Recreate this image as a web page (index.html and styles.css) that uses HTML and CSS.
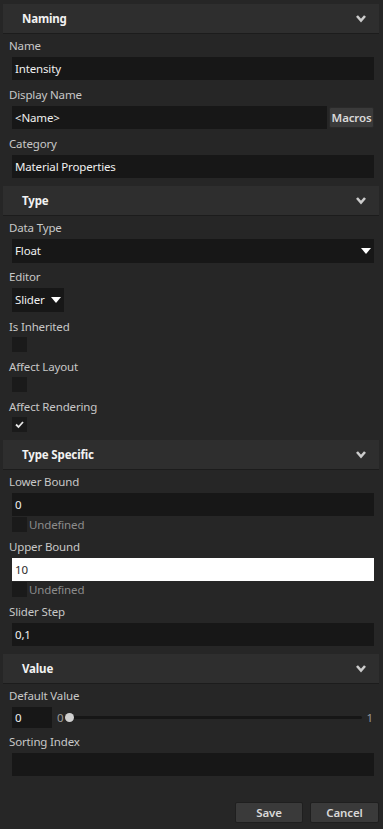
FILE: index.html
```html
<!DOCTYPE html>
<html lang="en">
  <head>
    <title>Property Editor</title>
    <link rel="stylesheet" href="styles.css">
  </head>

  <body>
    <main class="panel">
      <section class="group">
        <header class="group-head">
          <h2>Naming</h2>
          <svg class="chevron" viewBox="0 0 12 9"><path d="M2,2 6,6.5 10,2" /></svg>
        </header>
        <div class="field">
          <label>Name</label>
          <div class="input">Intensity</div>
        </div>
        <div class="field">
          <label>Display Name</label>
          <div class="input-row">
            <div class="input">&lt;Name&gt;</div>
            <button class="btn btn-macros">Macros</button>
          </div>
        </div>
        <div class="field">
          <label>Category</label>
          <div class="input">Material Properties</div>
        </div>
      </section>

      <section class="group">
        <header class="group-head">
          <h2>Type</h2>
          <svg class="chevron" viewBox="0 0 12 9"><path d="M2,2 6,6.5 10,2" /></svg>
        </header>
        <div class="field">
          <label>Data Type</label>
          <div class="input select">
            Float
            <svg class="caret" viewBox="0 0 10 6"><path d="M0,0 10,0 5,6Z" /></svg>
          </div>
        </div>
        <div class="field field-tight">
          <label>Editor</label>
          <div class="input select select-small">
            Slider
            <svg class="caret" viewBox="0 0 10 6"><path d="M0,0 10,0 5,6Z" /></svg>
          </div>
        </div>
        <div class="field">
          <label>Is Inherited</label>
          <span class="checkbox"></span>
        </div>
        <div class="field">
          <label>Affect Layout</label>
          <span class="checkbox"></span>
        </div>
        <div class="field">
          <label>Affect Rendering</label>
          <span class="checkbox checked">
            <svg viewBox="0 0 15 15"><path d="M4,7.5 6.5,10 11,5" /></svg>
          </span>
        </div>
      </section>

      <section class="group">
        <header class="group-head">
          <h2>Type Specific</h2>
          <svg class="chevron" viewBox="0 0 12 9"><path d="M2,2 6,6.5 10,2" /></svg>
        </header>
        <div class="field">
          <label>Lower Bound</label>
          <div class="input">0</div>
          <div class="option"><span class="checkbox"></span>Undefined</div>
        </div>
        <div class="field">
          <label>Upper Bound</label>
          <div class="input focused">10</div>
          <div class="option"><span class="checkbox"></span>Undefined</div>
        </div>
        <div class="field">
          <label>Slider Step</label>
          <div class="input">0,1</div>
        </div>
      </section>

      <section class="group">
        <header class="group-head">
          <h2>Value</h2>
          <svg class="chevron" viewBox="0 0 12 9"><path d="M2,2 6,6.5 10,2" /></svg>
        </header>
        <div class="field">
          <label>Default Value</label>
          <div class="slider-row">
            <div class="input number">0</div>
            <span class="range-label">0</span>
            <div class="track"><span class="thumb"></span></div>
            <span class="range-label">1</span>
          </div>
        </div>
        <div class="field field-tight">
          <label>Sorting Index</label>
          <div class="input"></div>
        </div>
      </section>

      <footer class="actions">
        <button class="btn btn-action">Save</button>
        <button class="btn btn-action btn-cancel">Cancel</button>
      </footer>
    </main>
  </body>
</html>
```

FILE: styles.css
```css
html,
body {
  margin: 0;
  background: #262626;
  font-size: 11.5px;
  letter-spacing: -0.15px;
  font-family: 'Noto Sans', 'Open Sans', arial, sans-serif;
  color: #c8c8c8;
}

.panel {
  padding: 4px 4px 0 3px;
}

.group + .group {
  margin-top: 8px;
}

.group-head {
  display: flex;
  align-items: center;
  justify-content: space-between;
  height: 29px;
  background: #2e2e2e;
  border-bottom: 1px solid #1c1c1c;
  padding: 0 12px 0 19px;
}

.group-head h2 {
  margin: 0;
  font-size: 11.5px;
  line-height: 16px;
  font-weight: bold;
  color: #f2f2f2;
}

.chevron {
  width: 12px;
  height: 9px;
  fill: none;
  stroke: #cccccc;
  stroke-width: 2.6;
}

.field {
  padding: 0 5px 0 6px;
  margin-top: 6px;
}

.field.field-tight {
  margin-top: 5px;
}

.group-head + .field {
  margin-top: 3px;
}

.field label {
  display: block;
  line-height: 17px;
  height: 17px;
}

.input {
  box-sizing: border-box;
  height: 23px;
  margin: 3px 0 0 3px;
  padding: 0 3px;
  background: #171717;
  color: #f0f0f0;
  line-height: 23px;
  white-space: nowrap;
}

.input.focused {
  background: #ffffff;
  color: #2a2a2a;
}

.input-row {
  display: flex;
  align-items: flex-start;
  gap: 2px;
}

.input-row .input {
  flex: 1;
}

.btn {
  font-family: inherit;
  font-size: 11.5px;
  letter-spacing: -0.15px;
  color: #d8d8d8;
  background: #3a3a3a;
  border: 1px solid #2a2a2a;
  border-radius: 2px;
  padding: 0;
  cursor: pointer;
}

.btn-macros {
  margin: 4px 0 0;
  width: 45px;
  height: 21px;
  font-weight: 600;
}

.select {
  height: 24px;
  line-height: 24px;
  display: flex;
  justify-content: space-between;
  align-items: center;
}

.select-small {
  width: 52px;
}

.caret {
  width: 10px;
  height: 6px;
  fill: #ffffff;
}

.checkbox {
  display: block;
  width: 15px;
  height: 15px;
  margin: 2px 0 0 3px;
  background: #1a1a1a;
}

.checkbox svg {
  display: block;
  width: 15px;
  height: 15px;
  fill: none;
  stroke: #e6e6e6;
  stroke-width: 1.8;
}

.option {
  display: flex;
  align-items: center;
  height: 15px;
  margin-top: 1px;
  line-height: 15px;
  color: #8c8c8c;
}

.option .checkbox {
  margin: 0 2px 0 3px;
}

.slider-row {
  display: flex;
  align-items: center;
  height: 21px;
  margin: 3px 0 0 3px;
}

.input.number {
  width: 40px;
  height: 21px;
  line-height: 21px;
  margin: 0;
  flex: none;
}

.range-label {
  color: #9a9a9a;
  margin: 0 6px 0 5px;
}

.range-label:last-child {
  margin: 0 1px 0 5px;
}

.track {
  flex: 1;
  position: relative;
  height: 3px;
  background: #161616;
  border-radius: 2px;
}

.thumb {
  position: absolute;
  left: -4px;
  top: -3px;
  width: 9px;
  height: 9px;
  border-radius: 50%;
  background: #cfcfcf;
}

.actions {
  display: flex;
  justify-content: flex-end;
  gap: 7px;
  margin-top: 26px;
  padding-bottom: 6px;
}

.btn-action {
  width: 68px;
  height: 21px;
  font-weight: 600;
  border-color: #1f1f1f;
}

.btn-cancel {
  width: 69px;
}
```
